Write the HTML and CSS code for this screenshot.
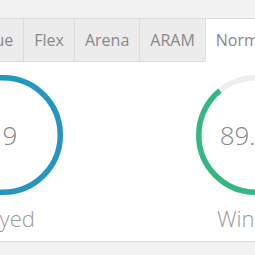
FILE: index.html
```html
<!DOCTYPE html>
<html>
<head>
<meta charset="utf-8">
<link rel="stylesheet" href="styles.css">
</head>
<body>
<div class="card">
  <div class="tabs">
    <div class="tab">Solo Queue</div>
    <div class="tab">Flex</div>
    <div class="tab">Arena</div>
    <div class="tab">ARAM</div>
    <div class="tab active">Normal</div>
    <div class="tab">Custom</div>
  </div>
  <div class="stats">
    <div class="stat">
      <div class="ring">
        <svg width="120" height="120" viewBox="0 0 120 120">
          <circle cx="60" cy="60" r="57.25" fill="none" stroke="#eeeeee" stroke-width="5.5"/>
          <circle cx="60" cy="60" r="57.25" fill="none" stroke="#2596c0" stroke-width="5.5"/>
        </svg>
        <span class="value">19</span>
      </div>
      <div class="label">Played</div>
    </div>
    <div class="stat">
      <div class="ring">
        <svg width="120" height="120" viewBox="0 0 120 120">
          <circle cx="60" cy="60" r="57.25" fill="none" stroke="#eeeeee" stroke-width="5.5"/>
          <circle cx="60" cy="60" r="57.25" fill="none" stroke="#33b883" stroke-width="5.5" stroke-dasharray="320.1 359.7" transform="rotate(-90 60 60)"/>
        </svg>
        <span class="value">89.2%</span>
      </div>
      <div class="label">Winrate</div>
    </div>
  </div>
</div>
</body>
</html>
```

FILE: styles.css
```css
html, body {
  margin: 0;
  padding: 0;
  background: #f2f2f2;
  overflow: hidden;
  font-family: "Open Sans", "Liberation Sans", sans-serif;
}
body {
  padding-top: 18px;
  width: 255px;
  height: 255px;
  box-sizing: border-box;
}
.card {
  background: #ffffff;
  border-top: 1px solid #dddddd;
  border-bottom: 1px solid #dddddd;
  overflow: hidden;
}
.tabs {
  display: flex;
  margin-left: -83px;
  width: max-content;
  background: #ececec;
}
.tab {
  height: 42px;
  line-height: 42px;
  padding: 0 10px;
  font-size: 16px;
  color: #888888;
  border-bottom: 1px solid #dddddd;
  border-left: 1px solid #dddddd;
  white-space: nowrap;
}
.tab:first-child {
  border-left: none;
}
.tab.active {
  background: #ffffff;
  border-bottom-color: #ffffff;
}
.stats {
  display: flex;
  margin-left: -124px;
  padding-top: 13px;
  padding-bottom: 7px;
}
.stat {
  width: 253px;
  flex: none;
  display: flex;
  flex-direction: column;
  align-items: center;
}
.ring {
  position: relative;
  width: 120px;
  height: 120px;
}
.ring svg {
  display: block;
}
.value {
  position: absolute;
  left: 50%;
  top: 50%;
  transform: translate(-50%, -50%);
  font-size: 26px;
  font-weight: 300;
  color: #888888;
  white-space: nowrap;
}
.label {
  margin-top: 8px;
  font-size: 22px;
  line-height: 1.4;
  font-weight: 300;
  color: #999999;
  white-space: nowrap;
}
```
